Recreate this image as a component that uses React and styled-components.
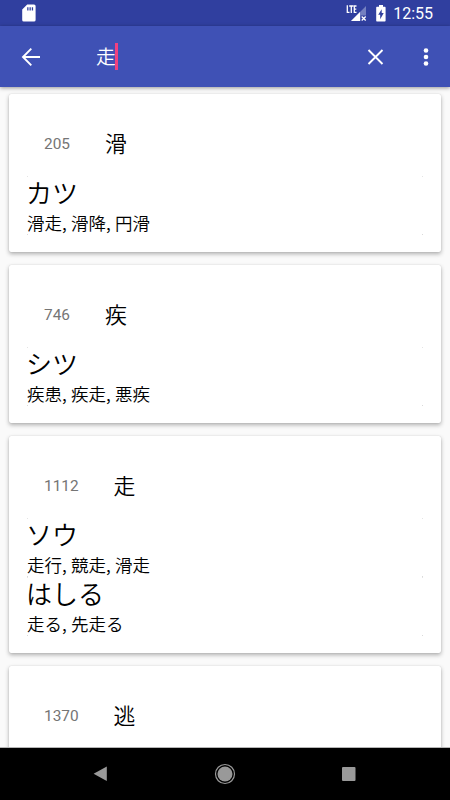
import React, { useState } from "react";
import styled, { createGlobalStyle } from "styled-components";

const GlobalStyle = createGlobalStyle`
  * {
    box-sizing: border-box;
  }
  body {
    margin: 0;
    background: #fafafa;
    font-family: Roboto, "Noto Sans CJK JP", sans-serif;
  }
`;

const entries = [
  {
    id: 205,
    kanji: "滑",
    readings: [{ kana: "カツ", words: "滑走, 滑降, 円滑" }],
  },
  {
    id: 746,
    kanji: "疾",
    readings: [{ kana: "シツ", words: "疾患, 疾走, 悪疾" }],
  },
  {
    id: 1112,
    kanji: "走",
    readings: [
      { kana: "ソウ", words: "走行, 競走, 滑走" },
      { kana: "はしる", words: "走る, 先走る" },
    ],
  },
  { id: 1370, kanji: "逃", readings: [] },
];

const Screen = styled.div`
  display: flex;
  flex-direction: column;
  width: 450px;
  height: 800px;
  overflow: hidden;
  background: #fafafa;
`;

const StatusBar = styled.div`
  display: flex;
  flex: none;
  align-items: center;
  height: 26px;
  padding: 0 17px 0 22px;
  background: #303f9f;
`;

const StatusIcons = styled.div`
  display: flex;
  align-items: center;
  gap: 9px;
  margin-left: auto;
`;

const Clock = styled.span`
  margin-left: -2px;
  color: #fff;
  font-size: 16px;
  line-height: 26px;
  padding-top: 2px;
`;

const Toolbar = styled.header`
  display: flex;
  flex: none;
  align-items: center;
  height: 61px;
  padding: 0 11px 0 18px;
  background: #3f51b5;
  box-shadow: 0 1px 4px rgba(0, 0, 0, 0.4);
  z-index: 1;
`;

const IconButton = styled.button`
  display: flex;
  padding: 0;
  border: 0;
  background: none;
  color: #fff;
  margin-right: ${(props) => props.$gap || 0}px;
`;

const Search = styled.div`
  display: flex;
  flex: 1;
  align-items: center;
  margin-left: 52px;
`;

const Query = styled.span`
  padding-top: 1px;
  color: #fff;
  font-size: 19.7px;
  line-height: 27px;
  font-weight: 350;
`;

const Caret = styled.span`
  width: 3px;
  height: 27px;
  margin-left: -1px;
  background: #f0407f;
`;

const List = styled.main`
  display: flex;
  flex: 1;
  flex-direction: column;
  gap: 13px;
  min-height: 0;
  padding: 7px 9px 0;
  overflow: hidden;
`;

const Card = styled.article`
  flex: none;
  padding: 0 18px 17px;
  border-radius: 2px;
  background: #fff;
  box-shadow: 0 0 1px rgba(0, 0, 0, 0.2), 0 2px 4px rgba(0, 0, 0, 0.3);
`;

const CardHeader = styled.div`
  display: flex;
  align-items: center;
  height: 82px;
  padding: 18px 17px 0;
`;

const Number = styled.span`
  color: #757575;
  font-size: 15.4px;
`;

const Kanji = styled.span`
  margin-left: 35px;
  padding-top: 2px;
  color: #000;
  font-size: 21.9px;
  font-weight: 350;
  line-height: 32px;
`;

/* faint rounded corners of the inner reading card */
const Reading = styled.div`
  height: 59px;
  color: #000;
  background: linear-gradient(#e4e4e4, #e4e4e4) 0 0 / 1px 1px no-repeat,
    linear-gradient(#e4e4e4, #e4e4e4) 100% 0 / 1px 1px no-repeat,
    linear-gradient(#dadada, #dadada) 0 100% / 1px 1px no-repeat,
    linear-gradient(#dadada, #dadada) 100% 100% / 1px 1px no-repeat;
`;

const Kana = styled.div`
  height: 35px;
  padding-top: 1px;
  margin-left: -1px;
  font-size: 26px;
  font-weight: 350;
  line-height: 35px;
`;

const Words = styled.div`
  height: 23px;
  font-family: "Noto Sans CJK JP", sans-serif;
  font-size: 17.5px;
  font-weight: 350;
  line-height: 23px;
  word-spacing: 0.4px;
`;

const NavBar = styled.nav`
  display: flex;
  flex: none;
  align-items: center;
  justify-content: space-between;
  height: 53px;
  padding: 0 94px 0 93px;
  border-top: 1px solid #b5b5b5;
  background: #000;
  z-index: 1;
`;

const SdCardIcon = () => (
  <svg width="14" height="18" viewBox="0 0 14 18">
    <path
      fill="#fff"
      fillRule="evenodd"
      d="M5.2.5H12a1.6 1.6 0 0 1 1.6 1.6v13.8a1.6 1.6 0 0 1-1.600 1.600H1.800A1.600 1.600 0 0 1 .2 15.900V5.500zM5.200 3.200v3.200h1.300V3.200zm2.300 0v3.200h1.300V3.200zm2.300 0v3.200h1.300V3.200z"
    />
  </svg>
);

const SignalIcon = () => (
  <svg width="22" height="18" viewBox="0 0 22 18">
    <path fill="#7480c0" d="M21 2v9.500h-5.400V17H6z" />
    <path fill="#fff" d="M15 8v9H6z" />
    <path d="M16.700 12.500l4 4M20.700 12.500l-4 4" stroke="#fff" strokeWidth="1.300" />
    <path
      d="M2.300 1.300v7.100h2.200M4.200 2h4.200M6.300 2v7.100M11.500 2H9.300v6.400h2.200M9.300 5.100h2"
      fill="none"
      stroke="#303f9f"
      strokeWidth="3"
    />
    <path
      d="M2.300 1.300v7.100h2.200M4.200 2h4.200M6.300 2v7.100M11.500 2H9.300v6.400h2.200M9.300 5.100h2"
      fill="none"
      stroke="#fff"
      strokeWidth="1.300"
    />
  </svg>
);

const BatteryIcon = () => (
  <svg width="10" height="17" viewBox="0 0 10 17">
    <path
      fill="#fff"
      d="M3 0h4v1.700h1.600c.6 0 1 .4 1 1V15.600c0 .6-.4 1-1 1H1.200c-.6 0-1-.4-1-1V2.700c0-.6.4-1 1-1H3z"
    />
    <path fill="#303f9f" d="M5.700 4.200v3.900h2L4.200 14.200v-4.500h-2z" />
  </svg>
);

const BackIcon = () => (
  <svg width="26" height="26" viewBox="0 0 26 26" fill="none" stroke="currentColor" strokeWidth="1.900">
    <path d="M22 13H5.500M13.300 4.700L5 13l8.300 8.300" />
  </svg>
);

const CloseIcon = () => (
  <svg width="26" height="26" viewBox="0 0 26 26" fill="none" stroke="currentColor" strokeWidth="1.900">
    <path d="M6.500 6l14 14M20.500 6l-14 14" />
  </svg>
);

const MoreIcon = () => (
  <svg width="26" height="26" viewBox="0 0 26 26" fill="currentColor">
    <circle cx="13" cy="6.500" r="2.300" />
    <circle cx="13" cy="13" r="2.300" />
    <circle cx="13" cy="19.500" r="2.300" />
  </svg>
);

const EntryCard = ({ id, kanji, readings }) => (
  <Card>
    <CardHeader>
      <Number>{id}</Number>
      <Kanji>{kanji}</Kanji>
    </CardHeader>
    {readings.map((r) => (
      <Reading key={r.kana}>
        <Kana>{r.kana}</Kana>
        <Words>{r.words}</Words>
      </Reading>
    ))}
    {/* keeps the height of a card that runs past the fold */}
    {readings.length === 0 && <Reading />}
  </Card>
);

const App = () => {
  const [query, setQuery] = useState("走");

  return (
    <Screen lang="ja">
      <GlobalStyle />
      <StatusBar>
        <SdCardIcon />
        <StatusIcons>
          <SignalIcon />
          <BatteryIcon />
          <Clock>12:55</Clock>
        </StatusIcons>
      </StatusBar>
      <Toolbar>
        <IconButton>
          <BackIcon />
        </IconButton>
        <Search>
          <Query>{query}</Query>
          <Caret />
        </Search>
        <IconButton $gap={25} onClick={() => setQuery("")}>
          <CloseIcon />
        </IconButton>
        <IconButton>
          <MoreIcon />
        </IconButton>
      </Toolbar>
      <List>
        {entries.map((e) => (
          <EntryCard key={e.id} {...e} />
        ))}
      </List>
      <NavBar>
        <svg width="14" height="16" viewBox="0 0 14 16">
          <path fill="#999" d="M13.800.600v14.400L.600 7.800z" />
        </svg>
        <svg width="22" height="22" viewBox="0 0 22 22">
          <circle cx="11" cy="11" r="7.500" fill="#999" />
          <circle cx="11" cy="11" r="9.500" fill="none" stroke="#999" strokeWidth="1.200" />
        </svg>
        <svg width="14" height="14" viewBox="0 0 14 14">
          <rect width="13.500" height="14" rx="1" fill="#999" />
        </svg>
      </NavBar>
    </Screen>
  );
};

export default App;
